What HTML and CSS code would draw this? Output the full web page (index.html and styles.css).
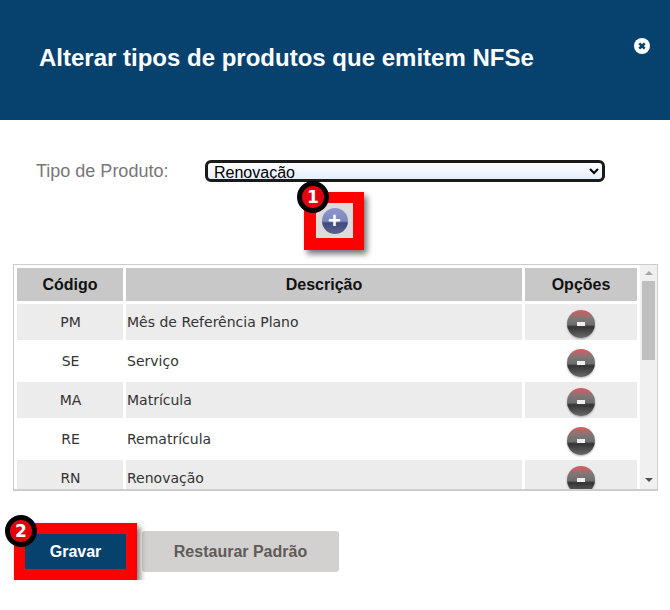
FILE: index.html
```html
<!DOCTYPE html>
<html lang="pt-BR">
    <head>
        <meta charset="utf-8">
        <title>Alterar tipos de produtos</title>
        <link rel="stylesheet" href="styles.css">
    </head>
    <body>
        <header class="topo">
            <h1>Alterar tipos de produtos que emitem NFSe</h1>
            <a class="fechar" href="#">
                <svg width="16" height="16" viewBox="0 0 16 16">
                    <circle cx="8" cy="8" r="8" fill="#fff"/>
                    <path d="M5.3 5.3L10.7 10.7M10.7 5.3L5.3 10.7" stroke="#07426f" stroke-width="2.6"/>
                </svg>
            </a>
        </header>
        <form class="conteudo">
            <div class="linha-tipo">
                <label for="tipo">Tipo de Produto:</label>
                <select id="tipo">
                    <option>Renovação</option>
                </select>
            </div>
            <div class="linha-add">
                <div class="marca marca-add">
                    <span class="numero">1</span>
                    <button type="button" class="add"><span class="add-icone">+</span></button>
                </div>
            </div>
            <div class="lista">
                <div class="lista-corpo">
                    <table>
                        <thead>
                            <tr>
                                <th class="cod">Código</th>
                                <th>Descrição</th>
                                <th class="opc">Opções</th>
                            </tr>
                        </thead>
                        <tbody>
                            <tr>
                                <td class="cod">PM</td>
                                <td>Mês de Referência Plano</td>
                                <td class="opc"><span class="remover"></span></td>
                            </tr>
                            <tr>
                                <td class="cod">SE</td>
                                <td>Serviço</td>
                                <td class="opc"><span class="remover"></span></td>
                            </tr>
                            <tr>
                                <td class="cod">MA</td>
                                <td>Matrícula</td>
                                <td class="opc"><span class="remover"></span></td>
                            </tr>
                            <tr>
                                <td class="cod">RE</td>
                                <td>Rematrícula</td>
                                <td class="opc"><span class="remover"></span></td>
                            </tr>
                            <tr>
                                <td class="cod">RN</td>
                                <td>Renovação</td>
                                <td class="opc"><span class="remover"></span></td>
                            </tr>
                        </tbody>
                    </table>
                </div>
                <div class="rolagem">
                    <span class="seta-cima"></span>
                    <span class="polegar"></span>
                    <span class="seta-baixo"></span>
                </div>
            </div>
            <div class="botoes">
                <div class="marca marca-gravar">
                    <span class="numero">2</span>
                    <button type="button" class="gravar">Gravar</button>
                </div>
                <button type="button" class="restaurar">Restaurar Padrão</button>
            </div>
        </form>
    </body>
</html>
```

FILE: styles.css
```css
* {
    box-sizing: border-box;
}
body {
    margin: 0;
    background: #fff;
    font-family: "Liberation Sans", Arial, sans-serif;
}
.topo {
    display: flex;
    justify-content: space-between;
    height: 120px;
    padding: 38px 20px 0 39px;
    background: #07426f;
    color: #fff;
}
.topo h1 {
    margin: 0;
    font-size: 24px;
    line-height: 40px;
}
.fechar {
    display: block;
    width: 16px;
    height: 16px;
    margin: 0;
    transform: translateY(0);
}
.conteudo {
    padding: 40px 12px 0 13px;
}
.linha-tipo {
    display: flex;
    align-items: center;
    height: 22px;
    padding-left: 23px;
}
.linha-tipo label {
    width: 169px;
    color: #777;
    font-size: 18px;
}
.linha-tipo select {
    width: 400px;
    height: 22px;
    padding: 0 0 0 2px;
    border: 3px solid #1a1a1a;
    border-radius: 6px;
    background: linear-gradient(#fff, #e6eeff);
    color: #000;
    font-family: "Liberation Sans", Arial, sans-serif;
    font-size: 16px;
}
.linha-add {
    display: flex;
    padding: 10px 0 0 291px;
}
.marca {
    position: relative;
    border: 11px solid #f00;
    box-shadow: 3px 4px 6px rgba(0, 0, 0, 0.55);
}
.numero {
    position: absolute;
    display: flex;
    align-items: center;
    justify-content: center;
    width: 32px;
    height: 32px;
    border: 5px solid #000;
    border-radius: 50%;
    background: #e3000f;
    color: #fff;
    font-family: "DejaVu Sans", sans-serif;
    font-size: 17px;
    font-weight: bold;
}
.marca-add {
    width: 60px;
    height: 58px;
    border-width: 11px 11px 12px 12px;
}
.marca-add .numero {
    top: -22px;
    left: -19px;
}
.add {
    display: flex;
    align-items: center;
    justify-content: center;
    width: 100%;
    height: 100%;
    padding: 0;
    border: 0;
    background: #dcdcdc;
}
.add-icone {
    display: block;
    width: 26px;
    height: 26px;
    border-radius: 50%;
    background: linear-gradient(#8c96cc 0%, #7f88bd 50%, #3f4a80 58%, #5c6390 100%);
    color: #fff;
    font-size: 22px;
    font-weight: bold;
    line-height: 25px;
    text-align: center;
}
.lista {
    display: flex;
    height: 227px;
    margin-top: 14px;
    border: 1px solid #ccc;
    border-width: 1px 1px 2px 1px;
}
.lista-corpo {
    flex: 1;
    overflow: hidden;
}
.lista table {
    width: 626px;
    border-spacing: 3px;
    table-layout: fixed;
    margin-top: 0;
}
.lista th {
    height: 33px;
    padding: 0;
    background: #c8c8c8;
    color: #111;
    font-size: 16px;
}
.lista td {
    height: 36px;
    padding: 0 0 0 1px;
    color: #333;
    font-family: "DejaVu Sans", sans-serif;
    font-size: 14px;
}
.lista tbody tr:nth-child(odd) td {
    background: #ececec;
}
.lista .cod {
    width: 106px;
    text-align: center;
}
.lista .opc {
    width: 112px;
    padding: 0;
    text-align: center;
}
.remover {
    position: relative;
    display: inline-block;
    width: 28px;
    height: 28px;
    margin-top: 3px;
    border-radius: 50%;
    background: linear-gradient(#dc5a5f 0%, #7d7777 30%, #6e6e6e 52%, #333 60%, #6a6a6a 100%);
    box-shadow: 0 1px 2px rgba(0, 0, 0, 0.3);
    vertical-align: middle;
}
.remover::after {
    content: "";
    position: absolute;
    top: 12px;
    left: 10px;
    width: 8px;
    height: 4px;
    background: #eee;
}
.rolagem {
    display: flex;
    flex-direction: column;
    align-items: center;
    width: 17px;
    background: #f0f0f0;
}
.seta-cima {
    width: 0;
    height: 0;
    margin: 6px 0 6px;
    border: 4px solid transparent;
    border-top: 0;
    border-bottom: 4px solid #a5a5a5;
}
.polegar {
    width: 13px;
    height: 79px;
    background: #bfbfbf;
}
.seta-baixo {
    width: 0;
    height: 0;
    margin: auto 0 7px;
    border: 4px solid transparent;
    border-bottom: 0;
    border-top: 4px solid #505050;
}
.botoes {
    display: flex;
    align-items: center;
    gap: 5px;
    margin-top: 32px;
    padding-left: 1px;
}
.marca-gravar .numero {
    top: -19px;
    left: -20px;
}
.gravar {
    display: block;
    width: 101px;
    height: 35px;
    padding: 0;
    border: 0;
    background: #07426f;
    color: #fff;
    font-family: "Liberation Sans", Arial, sans-serif;
    font-size: 16px;
    font-weight: bold;
}
.restaurar {
    width: 197px;
    height: 41px;
    padding: 0;
    border: 0;
    border-radius: 3px;
    background: #d3d1cf;
    color: #5f5a58;
    font-family: "Liberation Sans", Arial, sans-serif;
    font-size: 16px;
    font-weight: bold;
}
```
